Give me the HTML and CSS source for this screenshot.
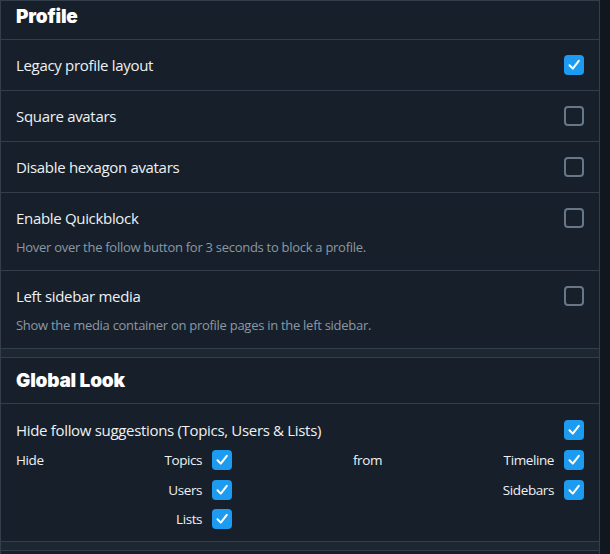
FILE: index.html
```html
<!DOCTYPE html>
<html lang="en">
<head>
<meta charset="utf-8">
<title>Settings</title>
<link rel="stylesheet" href="styles.css">
</head>
<body>
<div class="panel">
  <section class="section">
    <h2 class="section-head section-head--clipped">Profile</h2>
    <div class="row">
      <span class="row-title">Legacy profile layout</span>
      <span class="cb cb--on"><svg viewBox="0 0 20 20"><path d="M5.5 10.2 L8.8 13.6 L14.8 5.8"/></svg></span>
    </div>
    <div class="row">
      <span class="row-title">Square avatars</span>
      <span class="cb"></span>
    </div>
    <div class="row">
      <span class="row-title">Disable hexagon avatars</span>
      <span class="cb"></span>
    </div>
    <div class="row row--desc">
      <span class="row-title">Enable Quickblock</span>
      <span class="cb"></span>
      <p class="row-desc">Hover over the follow button for 3 seconds to block a profile.</p>
    </div>
    <div class="row row--desc">
      <span class="row-title">Left sidebar media</span>
      <span class="cb"></span>
      <p class="row-desc">Show the media container on profile pages in the left sidebar.</p>
    </div>
  </section>
  <section class="section section--boxed">
    <h2 class="section-head">Global Look</h2>
    <div class="block">
      <div class="block-line">
        <span class="row-title">Hide follow suggestions (Topics, Users &amp; Lists)</span>
        <span class="cb cb--on"><svg viewBox="0 0 20 20"><path d="M5.5 10.2 L8.8 13.6 L14.8 5.8"/></svg></span>
      </div>
      <div class="hide-grid">
        <span class="word">Hide</span>
        <label class="opt"><span>Topics</span><span class="cb cb--on"><svg viewBox="0 0 20 20"><path d="M5.5 10.2 L8.8 13.6 L14.8 5.8"/></svg></span></label>
        <span class="word">from</span>
        <label class="opt"><span>Timeline</span><span class="cb cb--on"><svg viewBox="0 0 20 20"><path d="M5.5 10.2 L8.8 13.6 L14.8 5.8"/></svg></span></label>
        <span></span>
        <label class="opt"><span>Users</span><span class="cb cb--on"><svg viewBox="0 0 20 20"><path d="M5.5 10.2 L8.8 13.6 L14.8 5.8"/></svg></span></label>
        <span></span>
        <label class="opt"><span>Sidebars</span><span class="cb cb--on"><svg viewBox="0 0 20 20"><path d="M5.5 10.2 L8.8 13.6 L14.8 5.8"/></svg></span></label>
        <span></span>
        <label class="opt"><span>Lists</span><span class="cb cb--on"><svg viewBox="0 0 20 20"><path d="M5.5 10.2 L8.8 13.6 L14.8 5.8"/></svg></span></label>
        <span></span>
        <span></span>
      </div>
    </div>
  </section>
  <div class="section section--tail"></div>
</div>
</body>
</html>
```
FILE: styles.css
```css
* { box-sizing: border-box; }
html, body { margin: 0; padding: 0; }
body {
  background: #11171e;
  font-family: "Open Sans", "Noto Sans", sans-serif;
  color: #eef1f3;
  height: 554px;
  overflow: hidden;
}
.panel {
  width: 600px;
  min-height: 554px;
  background: #1d2732;
  border-left: 1px solid #323e49;
  border-right: 1px solid #323e49;
  display: flex;
  flex-direction: column;
  gap: 8px;
}
.section {
  background: #17202a;
  border-top: 1px solid #323e49;
}
.section--boxed { border-bottom: 1px solid #323e49; }
.section--tail { flex: 1; }
.section-head {
  margin: 0;
  height: 46px;
  padding: 13px 15px 0;
  font-family: "Inter", sans-serif;
  font-weight: 900;
  font-size: 19px;
  line-height: 20px;
  letter-spacing: -0.2px;
  color: #ffffff;
  border-bottom: 1px solid #323e49;
}
.section-head--clipped {
  height: 39px;
  padding-top: 6px;
}
.row {
  height: 51px;
  padding: 0 15px;
  display: flex;
  align-items: center;
  justify-content: space-between;
  border-bottom: 1px solid #323e49;
}
.row-title {
  font-size: 15px;
  line-height: 20px;
  letter-spacing: -0.32px;
}
.row--desc {
  height: 78px;
  display: grid;
  grid-template-columns: 1fr auto;
  align-items: center;
  align-content: start;
  padding-top: 15px;
}
.row-desc {
  grid-column: 1 / -1;
  margin: 10px 0 0;
  font-size: 13px;
  line-height: 18px;
  letter-spacing: -0.28px;
  color: #8b98a5;
}
.cb {
  width: 20px;
  height: 20px;
  border-radius: 4px;
  border: 2px solid #66778a;
  display: inline-flex;
  flex-shrink: 0;
}
.cb--on {
  background: #1d9bf0;
  border: 0;
}
.cb svg {
  width: 20px;
  height: 20px;
  fill: none;
  stroke: #ffffff;
  stroke-width: 2;
  stroke-linecap: round;
  stroke-linejoin: round;
}
.block {
  padding: 16px 15px 12px;
}
.block-line {
  display: flex;
  align-items: center;
  justify-content: space-between;
  height: 20px;
}
.hide-grid {
  margin-top: 10px;
  display: grid;
  grid-template-columns: repeat(4, auto);
  justify-content: space-between;
  row-gap: 9.5px;
  font-size: 13.5px;
  line-height: 20px;
  letter-spacing: -0.4px;
}
.word { align-self: center; }
.opt {
  justify-self: end;
  display: flex;
  align-items: center;
  gap: 10px;
}
```
